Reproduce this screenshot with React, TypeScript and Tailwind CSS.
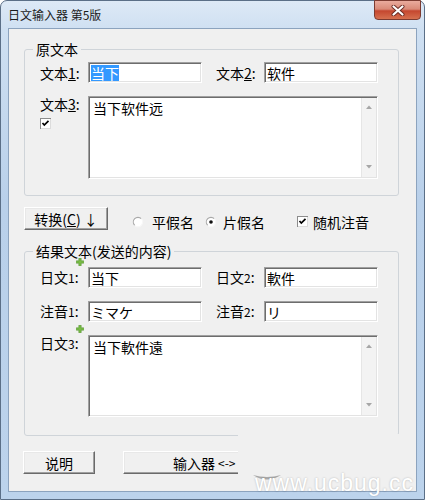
import React from "react";

function Field({ className = "", children }: { className?: string; children?: React.ReactNode }) {
  return (
    <div
      className={`h-[21px] border-t border-l border-r border-b border-t-[#a0a0a0] border-l-[#a0a0a0] border-r-[#ffffff] border-b-[#ffffff] shadow-[inset_1px_1px_0_#6d6d6d,inset_-1px_-1px_0_#e3e3e3] bg-white pl-[2px] flex items-center text-[14px] leading-[16px] whitespace-nowrap ${className}`}
    >
      {children}
    </div>
  );
}

function Memo({ className = "", children }: { className?: string; children?: React.ReactNode }) {
  return (
    <div
      className={`w-[290px] flex border-t border-l border-r border-b border-t-[#a0a0a0] border-l-[#a0a0a0] border-r-[#ffffff] border-b-[#ffffff] shadow-[inset_1px_1px_0_#6d6d6d,inset_-1px_-1px_0_#e3e3e3] bg-white ${className}`}
    >
      <div className="flex-1 pl-[4px] pt-[3px] text-[14px] leading-[16px]">{children}</div>
      <div className="w-[15px] my-[1px] mr-[1px] bg-[#f3f3f3] border-l border-[#e6e6e6] flex flex-col justify-between items-center pt-[7px] pb-[8px]">
        <svg width="6" height="4" viewBox="0 0 6 4">
          <path d="M0 4 L3 0.5 L6 4 Z" fill="#a6a6a6" />
        </svg>
        <svg width="6" height="4" viewBox="0 0 6 4">
          <path d="M0 0 L3 3.5 L6 0 Z" fill="#a6a6a6" />
        </svg>
      </div>
    </div>
  );
}

function Label({ className = "", children }: { className?: string; children?: React.ReactNode }) {
  return <div className={`w-[48px] text-[14px] leading-[16px] whitespace-nowrap ${className}`}>{children}</div>;
}

function Button({ className = "", children }: { className?: string; children?: React.ReactNode }) {
  return (
    <div
      className={`h-[23px] bg-[#f0f0f0] border-t border-l border-r border-b border-t-[#ffffff] border-l-[#ffffff] border-r-[#6a6a6a] border-b-[#6a6a6a] shadow-[inset_-1px_-1px_0_#a0a0a0,inset_1px_1px_0_#e8e8e8] flex items-center text-[14px] leading-[16px] whitespace-nowrap ${className}`}
    >
      {children}
    </div>
  );
}

function Checkbox() {
  return (
    <svg width="11" height="11" viewBox="0 0 11 11">
      <rect x="0" y="0" width="11" height="11" fill="#8c8c8c" />
      <rect x="1" y="1" width="10" height="10" fill="#dcdcdc" />
      <rect x="1" y="1" width="9" height="9" fill="#ffffff" />
      <path d="M2.5 5 L4.3 7 L8.5 2.8" stroke="#000" strokeWidth="1.7" fill="none" />
    </svg>
  );
}

function Radio({ checked = false }: { checked?: boolean }) {
  return (
    <svg width="12" height="12" viewBox="0 0 12 12">
      <circle cx="6" cy="6" r="4.6" fill="#ffffff" />
      <path d="M9.3 2.7 A4.6 4.6 0 0 0 2.7 9.3" stroke="#a8a8a8" strokeWidth="1.1" fill="none" />
      <path d="M2.7 9.3 A4.6 4.6 0 0 0 9.3 2.7" stroke="#f7f7f7" strokeWidth="1.1" fill="none" />
      {checked && <circle cx="6" cy="6" r="1.8" fill="#111" />}
    </svg>
  );
}

function Plus({ className = "" }: { className?: string }) {
  return (
    <svg className={className} width="8" height="8" viewBox="0 0 8 8">
      <path d="M2.8 0.3h2.4v2.5h2.5v2.4H5.2v2.5H2.8V5.2H0.3V2.8h2.5z" fill="#78bb46" stroke="#4a8a25" strokeWidth="0.5" />
    </svg>
  );
}

export default function App() {
  return (
    <div className="w-[425px] h-[500px] relative overflow-hidden font-['Noto_Sans_CJK_SC','Noto_Sans',sans-serif] text-black">
      <div className="w-full h-full rounded-t-[7px] border border-[#5b6f87] bg-[linear-gradient(180deg,#dde9f6_0px,#cfe0f2_28px,#b9d0ea_200px,#bcd3ec_500px)] flex flex-col">
        <div className="h-[27px] flex justify-between items-start">
          <div className="self-center pl-[7px] text-[12px] leading-[14px] text-[#1b1b1b]">日文输入器 第5版</div>
          <div className="mr-[3px] mt-[-1px] w-[47px] h-[20px] rounded-b-[4px] border border-[#7c3b31] bg-[linear-gradient(180deg,#eaab9d_0%,#d98a78_45%,#c5472f_55%,#d6704f_100%)] flex items-center justify-center">
            <svg width="14" height="11" viewBox="0 0 14 11">
              <path d="M2.5 1.5 L11.5 9.5 M11.5 1.5 L2.5 9.5" stroke="#6a2a22" strokeWidth="4" strokeLinecap="round" />
              <path d="M2.5 1.5 L11.5 9.5 M11.5 1.5 L2.5 9.5" stroke="#ffffff" strokeWidth="2.2" strokeLinecap="round" />
            </svg>
          </div>
        </div>

        <div className="mx-[7px] h-[464px] border border-[#8ca3be] bg-[#f0f0f0] flex flex-col pl-[15px] pr-[17px]">
          <fieldset className="mt-[11px] border border-[#cfd4d9] rounded-[3px] pb-[16px]">
            <legend className="ml-[8px] px-[3px] text-[14px] leading-[18px]">原文本</legend>
            <div className="pt-[4px] pl-[15px] flex flex-col">
              <div className="flex items-center">
                <Label>
                  文本<u>1</u>:
                </Label>
                <Field className="w-[114px]">
                  <span className="bg-[#3399ff] text-white">当下</span>
                </Field>
                <Label className="ml-[14px]">
                  文本<u>2</u>:
                </Label>
                <Field className="w-[114px]">软件</Field>
              </div>
              <div className="flex items-start mt-[13px]">
                <div className="w-[48px] flex flex-col">
                  <div className="text-[14px] leading-[16px]">
                    文本<u>3</u>:
                  </div>
                  <div className="mt-[6px] flex">
                    <Checkbox />
                  </div>
                </div>
                <Memo className="h-[83px]">当下软件远</Memo>
              </div>
            </div>
          </fieldset>

          <div className="mt-[11px] flex items-start">
            <Button className="w-[84px] justify-center">
              转换(<u>C</u>)&nbsp;↓
            </Button>
            <div className="mt-[3px] h-[23px] flex items-center text-[14px] leading-[16px]">
              <div className="ml-[24px] flex">
                <Radio />
              </div>
              <span className="ml-[8px]">平假名</span>
              <div className="ml-[11px] flex">
                <Radio checked />
              </div>
              <span className="ml-[6px]">片假名</span>
              <div className="ml-[32px] flex">
                <Checkbox />
              </div>
              <span className="ml-[5px]">随机注音</span>
            </div>
          </div>

          <fieldset className="mt-[9px] border border-[#cfd4d9] rounded-[3px] pb-[18px]">
            <legend className="ml-[8px] px-[3px] text-[14px] leading-[18px]">结果文本(发送的内容)</legend>
            <div className="pt-[7px] pl-[15px] flex flex-col">
              <div className="flex items-center">
                <Label className="relative">
                  日文<span className="text-[12px]">1</span>:
                  <Plus className="absolute left-[36px] top-[-11px]" />
                </Label>
                <Field className="w-[114px]">当下</Field>
                <Label className="ml-[14px]">
                  日文<span className="text-[12px]">2</span>:
                </Label>
                <Field className="w-[114px]">軟件</Field>
              </div>
              <div className="flex items-center mt-[13px]">
                <Label>
                  注音<span className="text-[12px]">1</span>:
                </Label>
                <Field className="w-[114px]">ミマケ</Field>
                <Label className="ml-[14px]">
                  注音<span className="text-[12px]">2</span>:
                </Label>
                <Field className="w-[114px]">リ</Field>
              </div>
              <div className="flex items-start mt-[13px]">
                <Label className="relative">
                  日文<span className="text-[12px]">3</span>:
                  <Plus className="absolute left-[36px] top-[-10px]" />
                </Label>
                <Memo className="h-[82px]">当下軟件遠</Memo>
              </div>
            </div>
          </fieldset>

          <div className="mt-[15px] flex items-start">
            <Button className="ml-[-1px] w-[72px] justify-center">说明</Button>
            <Button className="ml-[28px] w-[180px] pl-[49px]">
              输入器 <span className="ml-[3px] text-[12px]">&lt;-&gt;</span>
            </Button>
          </div>
        </div>
      </div>

      <div className="absolute left-[238px] top-[434px] w-[178px] h-[57px] bg-[#f0f0f0]" />
      <svg className="absolute left-[253px] top-[475px]" width="28" height="7" viewBox="0 0 28 7">
        <path d="M0 0 Q14 9 28 0 Q14 4 0 0 Z" fill="#a9a9a9" />
      </svg>
      <div className="absolute left-[255px] top-[472px] text-[23px] leading-[23px] tracking-[1px] text-white font-['Liberation_Sans',Arial,sans-serif] whitespace-nowrap [text-shadow:0_0_2px_rgba(0,0,0,0.25)]">
        www.ucbug.cc
      </div>
    </div>
  );
}
